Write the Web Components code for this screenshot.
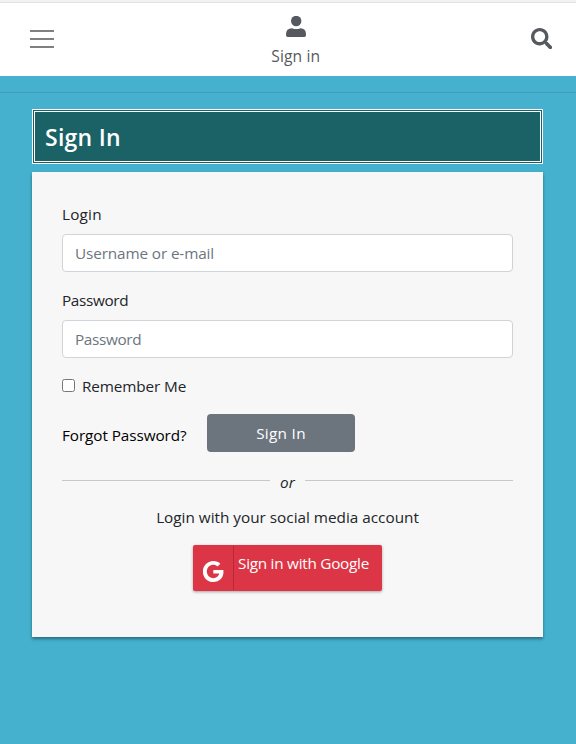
<!DOCTYPE html>
<html lang="en">
<head>
<meta charset="utf-8">
<title>Sign In</title>
<style>
html,body{margin:0;height:100%}
body{background:#45b1ce;font:15.3px/24px "Open Sans","Noto Sans",sans-serif;color:#212529;overflow:hidden}
</style>
</head>
<body>
<sign-page></sign-page>
<script>
const define = (name, html) => customElements.define(name, class extends HTMLElement {
  constructor() {
    super();
    const t = document.createElement('template');
    t.innerHTML = html;
    this.attachShadow({mode: 'open'}).append(t.content.cloneNode(true));
  }
});

define('top-bar', `<style>
:host{display:flex;box-sizing:border-box;height:76px;background:#fff;border-top:2px solid #f1f3f2;box-shadow:inset 0 1px #dfe2e1;justify-content:space-between;align-items:flex-start;padding:0 24px 0 24px}
.menu{width:36px;height:36px;margin-top:19px}
.search{width:21.5px;height:21.5px;margin-top:25.5px}
.user{display:flex;flex-direction:column;align-items:center;color:#565a5f;margin:14px 0 0 1px}
.user svg{width:20px;height:22px}
.user span{font-size:15.6px;line-height:24px;margin-top:6px;letter-spacing:.15px}
svg{display:block}
</style>
<svg class="menu" viewBox="0 0 36 36"><path d="M6 10h24M6 18h24M6 26h24" stroke="#808080" stroke-width="2"/></svg>
<div class="user"><svg viewBox="0 0 20 22"><circle cx="10.2" cy="5" r="5.2" fill="#565a5f"/><path d="M6 12.2q4.2 1.7 8.4 0 5.6.2 5.600 6v1.100q0 1.700-1.700 1.700H1.800Q0 21 0 19.300v-1.100q0-5.800 6-6z" fill="#565a5f"/></svg><span>Sign in</span></div>
<svg class="search" viewBox="0 0 512 512"><path fill="#565a5f" d="M505 442.700 405.300 343c-4.500-4.500-10.600-7-17-7H372c27.600-35.300 44-79.700 44-128C416 93.100 322.900 0 208 0S0 93.100 0 208s93.100 208 208 208c48.300 0 92.700-16.400 128-44v16.300c0 6.400 2.500 12.500 7 17l99.700 99.700c9.400 9.400 24.600 9.400 33.900 0l28.300-28.300c9.400-9.400 9.400-24.600.1-34zM208 336c-70.700 0-128-57.200-128-128 0-70.700 57.200-128 128-128 70.700 0 128 57.200 128 128 0 70.700-57.200 128-128 128z"/></svg>`);

define('page-title', `<style>
:host{display:block;box-sizing:border-box;height:55px;border:3px double #fff;background:#1a6265;color:#fff;font:600 23px/50px "Open Sans","Noto Sans",sans-serif;padding-left:10px}
</style><slot></slot>`);

define('text-field', `<style>
:host{display:flex;flex-direction:column;gap:8px;margin-bottom:16px}
.box{box-sizing:border-box;height:38px;border:1px solid #ced4da;border-radius:4px;background:#fff;padding:6px 12px;color:#6c757d}
.label{height:24px}
</style><div class="label"><slot name="label"></slot></div><div class="box"><slot></slot></div>`);

define('check-option', `<style>
:host{display:flex;align-items:center;gap:7px;height:24px}
i{box-sizing:border-box;width:13px;height:13px;border:1px solid #767676;border-radius:2.5px;background:#fff;margin-top:-1px}
</style><i></i><slot></slot>`);

define('submit-button', `<style>
:host{display:block;box-sizing:border-box;width:148px;height:38px;border-radius:4px;background:#6c757d;color:#fff;text-align:center;line-height:38px}
</style><slot></slot>`);

define('or-divider', `<style>
:host{display:flex;align-items:center;gap:10px;height:24px;font-style:italic}
:host::before,:host::after{content:"";flex:1;height:1px;background:#c8c8c8;margin-top:-3px}
</style><slot></slot>`);

define('google-button', `<style>
:host{display:flex;box-sizing:border-box;width:189px;height:46px;border-radius:2px;background:#dc3545;color:#fff;box-shadow:0 1px 3px rgba(0,0,0,.35);margin:0 auto}
.icon{box-sizing:border-box;width:41px;height:44px;margin-top:1px;border-right:1px solid #b52b39;padding:15px 0 0 10px}
.label{padding:6px 0 0 4px;white-space:nowrap}
svg{display:block;width:21px;height:21px}
</style><div class="icon"><svg viewBox="8 8 488 496"><path fill="#fff" d="M488 261.800C488 403.300 391.100 504 248 504 110.800 504 0 393.200 0 256S110.800 8 248 8c66.800 0 123 24.500 166.300 64.900l-67.500 64.900C258.500 52.600 94.300 116.600 94.300 256c0 86.500 69.100 156.600 153.700 156.600 98.200 0 135-70.400 140.800-106.900H248v-85.300h236.100c2.300 12.700 3.900 24.900 3.900 41.400z"/></svg></div><div class="label"><slot></slot></div>`);

define('sign-card', `<style>
:host{display:flex;flex-direction:column;box-sizing:border-box;height:465px;margin-top:8px;padding:30px 30px 0;background:#f7f7f7;box-shadow:0 2px 3px rgba(0,0,0,.4)}
</style><slot></slot>`);

define('sign-page', `<style>
:host{display:block}
hr{border:0;height:1px;margin:16px 0;background:#409ebb}
main{padding:0 33px 0 32px}
.row{display:flex;gap:20px;margin-top:16px}
.forgot{color:#000;line-height:42px;white-space:nowrap;width:125px}
.social{text-align:center;margin:11px 0 16px;height:24px;white-space:nowrap}
or-divider{margin-top:14px}
span{white-space:nowrap}
.title{letter-spacing:.25px}
.login{letter-spacing:.2px}
.username{letter-spacing:-.12px}
.password{letter-spacing:-.35px}
.remember{letter-spacing:-.12px}
.forgot span{letter-spacing:-.08px}
.submit{letter-spacing:.3px}
.or{letter-spacing:.3px}
.google{letter-spacing:-.26px}
</style>
<top-bar></top-bar><hr>
<main>
<page-title><span class="title">Sign In</span></page-title>
<sign-card>
<text-field><span slot="label" class="login">Login</span><span class="username">Username or e-mail</span></text-field>
<text-field><span slot="label" class="password">Password</span><span class="password">Password</span></text-field>
<check-option><span class="remember">Remember Me</span></check-option>
<div class="row"><div class="forgot"><span>Forgot Password?</span></div><submit-button><span class="submit">Sign In</span></submit-button></div>
<or-divider><span class="or">or</span></or-divider>
<div class="social"><span>Login with your social media account</span></div>
<google-button><span class="google">Sign in with Google</span></google-button>
</sign-card>
</main>`);
</script>
</body>
</html>
